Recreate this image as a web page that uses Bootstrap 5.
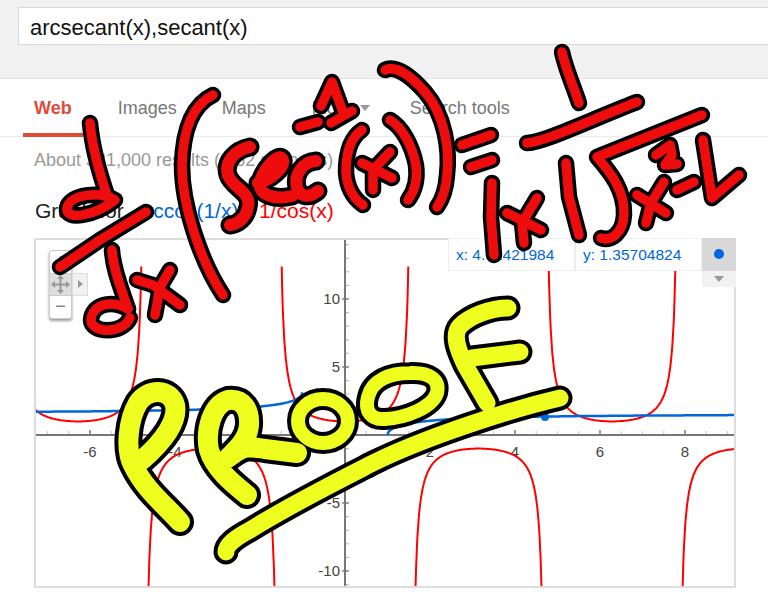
<!DOCTYPE html>
<html lang="en">
<head>
    <meta charset="UTF-8">
    <meta name="viewport" content="width=device-width, initial-scale=1.0">
    <title>arcsecant(x),secant(x)</title>
    <link rel="stylesheet" href="https://cdn.jsdelivr.net/npm/bootstrap@5.3.0/dist/css/bootstrap.min.css">
    <style>
        body { width: 768px; height: 604px; overflow: hidden; position: relative; font-family: "Liberation Sans", Arial, sans-serif; background: #fff; }
        .top-bar { height: 79px; background: #f1f1f1; border-bottom: 1px solid #e5e5e5; padding: 7px 0 0 18px; }
        .query-box { width: 780px; height: 38px; border: 1px solid #d9d9d9; border-radius: 0; padding: 3px 11px 0; font-size: 22px; color: #111; box-shadow: none; }
        .tab-row { height: 58px; border-bottom: 1px solid #ebebeb; flex-wrap: nowrap; }
        .tab-link { height: 58px; padding: 19px 0 0; font-size: 18px; line-height: 21px; color: #777; }
        .tab-web { margin-left: 23px; padding: 19px 11px 0; color: #dd4b39; font-weight: 700; border-bottom: 4px solid #dd4b39; }
        .tab-images { margin-left: 35px; }
        .tab-maps { margin-left: 45px; }
        .tab-more { margin-left: 46px; }
        .tab-tools { margin-left: 40px; }
        .tab-caret { width: 0; height: 0; margin: 26px 0 0 7px; border-left: 5px solid transparent; border-right: 5px solid transparent; border-top: 6px solid #999; }
        .result-count { margin: 13px 0 0 34px; font-size: 18px; line-height: 21px; color: #999; white-space: nowrap; }
        .graph-title { margin: 28px 0 15px 35px; font-size: 21px; line-height: 24px; color: #222; white-space: nowrap; }
        .fn-blue { margin-left: 5px; color: #0066dd; }
        .fn-red { margin-left: 9px; color: #f00; }
        .graph-box { width: 702px; height: 350px; margin-left: 34px; position: relative; }
        .graph-box > svg { display: block; }
        .axis-label { font-size: 15px; fill: #444; }
        .zoom-ctl { position: absolute; left: 15px; top: 12px; width: 23px; background: #fff; border: 1px solid #ccc; border-radius: 3px; box-shadow: 0 2px 3px rgba(0,0,0,.4); }
        .zoom-cell { height: 22px; color: #888; font-size: 18px; line-height: 20px; text-align: center; }
        .zoom-pan { height: 23px; background: #ddd; border-top: 1px solid #ccc; border-bottom: 1px solid #ccc; }
        .zoom-pan svg { display: block; }
        .pan-next { position: absolute; left: 22px; top: 22px; width: 16px; height: 23px; background: #f1f1f1; border: 1px solid #ddd; }
        .pan-next::after { content: ""; position: absolute; left: 5px; top: 6px; border-left: 5px solid #999; border-top: 4px solid transparent; border-bottom: 4px solid transparent; }
        .trace-panel { position: absolute; right: 0; top: 0; font-size: 15.5px; color: #0066dd; }
        .trace-cell { width: 127px; height: 33px; line-height: 32px; padding-left: 7px; background: #fff; border: 1px solid #eee; white-space: nowrap; }
        .trace-dot { width: 34px; height: 33px; background: #d8d8d8; position: relative; }
        .trace-dot::after { content: ""; position: absolute; left: 12px; top: 11px; width: 10px; height: 10px; border-radius: 50%; background: #0066dd; }
        .trace-down { width: 34px; height: 16px; background: #f1f1f1; position: relative; }
        .trace-down::after { content: ""; position: absolute; left: 12px; top: 5px; border-left: 5px solid transparent; border-right: 5px solid transparent; border-top: 6px solid #999; }
        .ink-layer { position: absolute; left: 0; top: 0; pointer-events: none; fill: none; stroke-linecap: round; stroke-linejoin: round; }
        .ink-edge { stroke: #000; }
        .ink-red { stroke: #ee0c0c; }
        .ink-yellow { stroke: #eeff20; }
    </style>
</head>
<body>
    <div class="top-bar">
        <input type="text" class="form-control query-box" value="arcsecant(x),secant(x)">
    </div>

    <nav class="nav tab-row">
        <a class="nav-link tab-link tab-web" href="#">Web</a>
        <a class="nav-link tab-link tab-images" href="#">Images</a>
        <a class="nav-link tab-link tab-maps" href="#">Maps</a>
        <a class="nav-link tab-link tab-more" href="#">More</a>
        <span class="tab-caret"></span>
        <a class="nav-link tab-link tab-tools" href="#">Search tools</a>
    </nav>

    <div class="result-count">About 321,000 results (0.62 seconds)</div>
    <div class="graph-title">Graph for <span class="fn-blue">arccos(1/x)</span>, <span class="fn-red">1/cos(x)</span></div>

    <div class="graph-box">
        <svg id="plot" width="702" height="350" viewBox="34 238 702 350" fill="none"></svg>

        <div class="zoom-ctl">
            <div class="zoom-cell">+</div>
            <div class="zoom-pan">
                <svg width="21" height="21" viewBox="0 0 21 21" fill="#999">
                    <path d="M4 9.5h13v2H4zM9.5 4h2v13h-2z"/>
                    <path d="M10.5 1l3.500 4h-7zM10.500 20l3.500-4h-7zM1 10.500l4-3.500v7zM20 10.500l-4-3.500v7z"/>
                </svg>
            </div>
            <div class="zoom-cell">&minus;</div>
            <div class="pan-next"></div>
        </div>

        <div class="trace-panel d-flex">
            <div class="trace-cell">x: 4.71421984</div>
            <div class="trace-cell">y: 1.35704824</div>
            <div>
                <div class="trace-dot"></div>
                <div class="trace-down"></div>
            </div>
        </div>
    </div>

    <svg class="ink-layer" width="768" height="604" viewBox="0 0 768 604">
        <defs>
            <g id="redStrokes">
                <!-- d/dx -->
                <path d="M90,123 C92,145 100,175 108,198"/>
                <path d="M115,200 C100,191 70,194 67,208 C65,221 95,216 115,200"/>
                <path d="M60,267 L100,240 L146,212"/>
                <path d="M112,250 C113,270 122,290 128,309"/>
                <path d="M128,309 C110,299 92,305 91,320 C91,333 122,335 130,318"/>
                <path d="M137,280 L153,285 L180,305"/>
                <path d="M170,270 L160,287 L155,315"/>
                <!-- big brackets -->
                <path d="M213,95 C192,105 183,130 182,165 C182,205 200,260 223,295"/>
                <path d="M385,70 C395,65 410,75 425,92 C445,115 450,150 447,175 C446,190 442,200 437,207"/>
                <!-- -1 -->
                <path d="M300,127 L318,122"/>
                <path d="M321,106 L332,82 L343,112"/>
                <path d="M352,111 L331,123"/>
                <!-- (x) -->
                <path d="M362,130 C350,138 346,155 346,172 C347,188 353,198 363,205"/>
                <path d="M362,163 L392,178"/>
                <path d="M390,152 L373,170 L373,190"/>
                <path d="M390,120 C402,127 412,145 416,165 C418,180 414,192 408,200"/>
                <!-- = -->
                <path d="M462,145 L491,135"/>
                <path d="M471,167 L492,160"/>
                <!-- fraction -->
                <path d="M562,52 C566,70 573,85 579,103"/>
                <path d="M527,143 C545,142 590,120 637,102"/>
                <path d="M492,183 L491,217 L494,255"/>
                <path d="M507,213 L541,230"/>
                <path d="M537,198 L522,223 L524,243"/>
                <path d="M566,163 L569,197 L579,235"/>
                <path d="M702,115 L597,157 C610,172 625,190 624,215 C623,232 612,242 601,238"/>
                <path d="M656,155 L670,145 L672,155 L665,165 L677,164"/>
                <path d="M637,195 L666,213"/>
                <path d="M664,182 L651,203 L646,223"/>
                <path d="M677,190 L694,182"/>
                <path d="M703,140 L712,198 L739,175"/>
            </g>
            <g id="redHeavy">
                <!-- sec -->
                <path d="M250,147 C235,150 224,162 228,175 C232,188 252,192 248,207 C246,218 238,224 230,225"/>
                <path d="M258,183 C270,180 285,168 283,160 C280,150 262,170 260,183 C258,195 275,200 292,196"/>
                <path d="M316,161 C302,162 294,175 297,187 C300,198 310,198 318,191"/>
            </g>
            <g id="yellowLetters">
                <path d="M180,522 C165,505 145,490 133,465 C125,450 128,420 138,403 C148,388 170,388 175,405 C178,420 165,440 142,460"/>
                <path d="M247,495 C235,485 215,470 209,450 C205,430 212,405 228,400 C243,398 250,410 249,425 C248,440 236,450 228,458"/>
                <path d="M232,455 C245,445 250,447 265,449 L297,453"/>
            </g>
            <g id="yellowRings">
                <ellipse cx="323" cy="421" rx="25" ry="22"/>
                <path d="M368,397 C372,380 390,373 410,373 C430,372 440,380 437,393 C432,408 405,418 385,419 C372,420 364,412 368,397Z"/>
            </g>
            <g id="yellowStrokes">
                <path d="M508,308 C490,308 470,316 460,326 C452,335 458,350 465,365 L487,403"/>
                <path d="M472,358 L520,352"/>
                <path d="M226,552 C226,545 235,538 250,530 C290,505 330,485 375,462 C420,440 500,412 560,398"/>
            </g>
        </defs>
        <use href="#redStrokes" class="ink-edge" stroke-width="16.500"/>
        <use href="#redHeavy" class="ink-edge" stroke-width="19"/>
        <use href="#redStrokes" class="ink-red" stroke-width="9.500"/>
        <use href="#redHeavy" class="ink-red" stroke-width="12"/>
        <use href="#yellowLetters" class="ink-edge" stroke-width="28"/>
        <use href="#yellowRings" class="ink-edge" stroke-width="22"/>
        <use href="#yellowStrokes" class="ink-edge" stroke-width="25"/>
        <use href="#yellowLetters" class="ink-yellow" stroke-width="20"/>
        <use href="#yellowRings" class="ink-yellow" stroke-width="14"/>
        <use href="#yellowStrokes" class="ink-yellow" stroke-width="17"/>
    </svg>

    <script src="https://cdn.jsdelivr.net/npm/bootstrap@5.3.0/dist/js/bootstrap.bundle.min.js"></script>
    <script>
        const plot = document.getElementById("plot");
        const originX = 345, originY = 435, unitX = 42.5, unitY = 13.6;
        const toX = x => originX + x * unitX;
        const toY = y => originY - y * unitY;

        function add(tag, attrs, text) {
            const el = document.createElementNS("http://www.w3.org/2000/svg", tag);
            for (const k in attrs) el.setAttribute(k, attrs[k]);
            if (text) el.textContent = text;
            plot.appendChild(el);
        }

        // x axis ticks every half unit, labels every 2
        for (let x = -7; x <= 9; x += 0.5) {
            if (x === 0) continue;
            const major = x % 2 === 0;
            add("line", { x1: toX(x), x2: toX(x), y1: major ? 430 : 431, y2: 435, stroke: major ? "#555" : "#ccc", "stroke-width": 1.2 });
            if (major) add("text", { x: toX(x), y: 457, "text-anchor": "middle", class: "axis-label" }, String(x));
        }
        // y axis ticks every unit, labels every 5
        for (let y = -11; y <= 14; y++) {
            if (y === 0) continue;
            const major = y % 5 === 0;
            add("line", { x1: major ? 342 : 345, x2: 349, y1: toY(y), y2: toY(y), stroke: major ? "#666" : "#bbb", "stroke-width": 1.2 });
            if (major) add("text", { x: 340, y: toY(y) + 5, "text-anchor": "end", class: "axis-label" }, String(y));
        }
        add("line", { x1: 34, x2: 736, y1: originY, y2: originY, stroke: "#777", "stroke-width": 2 });
        add("line", { x1: originX, x2: originX, y1: 238, y2: 588, stroke: "#777", "stroke-width": 2 });

        // 1/cos(x), one path per branch
        for (let k = -3; k <= 3; k++) {
            const mid = k * Math.PI;
            let d = "";
            for (let x = mid - 1.57; x <= mid + 1.57; x += 0.01) {
                const y = 1 / Math.cos(x);
                if (Math.abs(y) > 14) continue;
                d += (d ? "L" : "M") + toX(x).toFixed(1) + "," + toY(y).toFixed(1);
            }
            add("path", { d, stroke: "#f00", "stroke-width": 2 });
        }

        // arccos(1/x) only exists outside -1..1
        function arcBranch(from, to) {
            let d = "";
            for (let x = from; x <= to; x += 0.02) {
                d += (d ? "L" : "M") + toX(x).toFixed(1) + "," + toY(Math.acos(1 / x)).toFixed(1);
            }
            add("path", { d, stroke: "#0066dd", "stroke-width": 2.5 });
        }
        arcBranch(-7.3, -1);
        arcBranch(1, 9.2);
        add("circle", { cx: 545, cy: 417, r: 4, fill: "#0066dd" });

        add("rect", { x: 35, y: 239, width: 700, height: 348, stroke: "#ddd", "stroke-width": 2 });
    </script>
</body>
</html>
